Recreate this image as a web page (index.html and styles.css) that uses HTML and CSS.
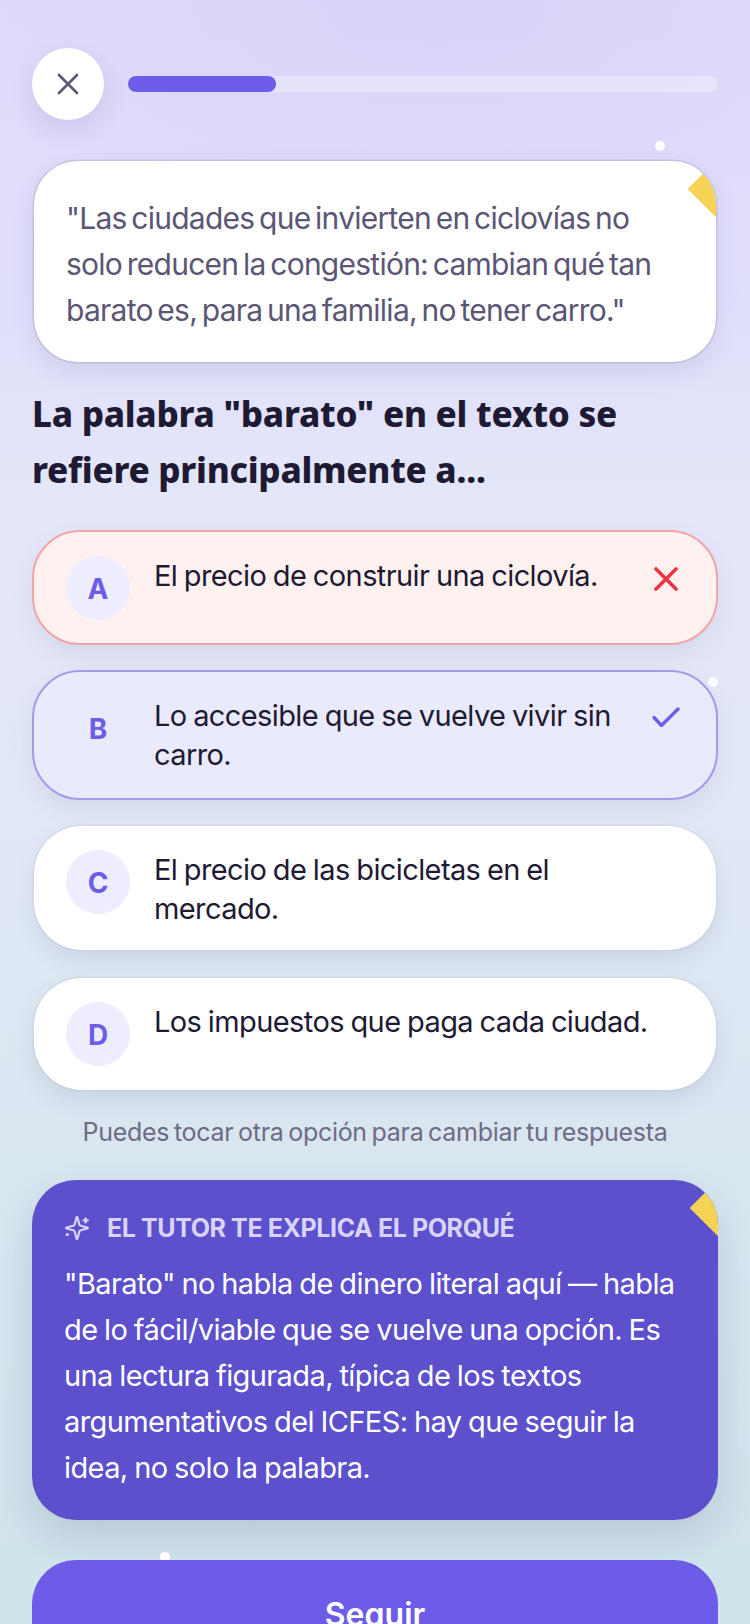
FILE: index.html
```html
<!DOCTYPE html>
<html lang="es">
<head>
<meta charset="utf-8">
<title>Pregunta</title>
<link rel="stylesheet" href="styles.css">
</head>
<body>
<main class="screen">
  <span class="dot dot-1"></span>
  <span class="dot dot-2"></span>
  <span class="dot dot-3"></span>
  <header class="top">
    <button class="close" aria-label="Cerrar">
      <svg width="24" height="24" viewBox="0 0 24 24" fill="none" stroke="#5b5675" stroke-width="2.6" stroke-linecap="round"><path d="M3 3l18 18M21 3L3 21"/></svg>
    </button>
    <div class="track"><div class="fill"></div></div>
  </header>
  <section class="quote">
    <span class="tag"></span>
    <p>"Las ciudades que invierten en ciclovías no solo reducen la congestión: cambian qué tan barato es, para una familia, no tener carro."</p>
  </section>
  <h1 class="question">La palabra "barato" en el texto se refiere principalmente a...</h1>
  <div class="options">
    <div class="option wrong">
      <span class="letter">A</span>
      <span class="text">El precio de construir una ciclovía.</span>
      <svg class="mark mark-x" width="24" height="24" viewBox="0 0 24 24" fill="none" stroke="#ef3340" stroke-width="3.6" stroke-linecap="round"><path d="M2 2l20 20M22 2L2 22"/></svg>
    </div>
    <div class="option right">
      <span class="letter plain">B</span>
      <span class="text">Lo accesible que se vuelve vivir sin carro.</span>
      <svg class="mark mark-check" width="28" height="20" viewBox="0 0 28 20" fill="none" stroke="#6c5ce7" stroke-width="3.3" stroke-linecap="round" stroke-linejoin="round"><path d="M2 10.500l7.500 8L26 2"/></svg>
    </div>
    <div class="option plainrow">
      <span class="letter">C</span>
      <span class="text">El precio de las bicicletas en el mercado.</span>
    </div>
    <div class="option plainrow">
      <span class="letter">D</span>
      <span class="text">Los impuestos que paga cada ciudad.</span>
    </div>
  </div>
  <p class="hint">Puedes tocar otra opción para cambiar tu respuesta</p>
  <section class="tutor">
    <span class="tag"></span>
    <h2><svg width="26" height="26" viewBox="0 0 24 24" fill="none" stroke="#d9d4fb" stroke-width="2" stroke-linejoin="round" stroke-linecap="round"><path d="M9.937 15.500A2 2 0 0 0 8.500 14.063l-6.135-1.582a.5.5 0 0 1 0-.962L8.500 9.936A2 2 0 0 0 9.937 8.500l1.582-6.135a.5.5 0 0 1 .963 0L14.063 8.500A2 2 0 0 0 15.500 9.937l6.135 1.581a.5.5 0 0 1 0 .964L15.500 14.063a2 2 0 0 0-1.437 1.437l-1.582 6.135a.5.5 0 0 1-.963 0z"/><path d="M20 3v4M22 5h-4"/><path d="M3 18h.01" stroke-width="3"/></svg>EL TUTOR TE EXPLICA EL PORQUÉ</h2>
    <p>"Barato" no habla de dinero literal aquí — habla de lo fácil/viable que se vuelve una opción. Es una lectura figurada, típica de los textos argumentativos del ICFES: hay que seguir la idea, no solo la palabra.</p>
  </section>
  <button class="next">Seguir</button>
</main>
</body>
</html>
```
FILE: styles.css
```css
* { box-sizing: border-box; }
html, body { margin: 0; height: 100%; overflow: hidden; }
body { font-family: "Inter", "Liberation Sans", sans-serif; color: #1e1a33; }
p, h1, h2 { margin: 0; }
.screen {
  position: relative;
  width: 750px;
  height: 1624px;
  overflow: hidden;
  padding: 48px 32px 0;
  background:
    radial-gradient(ellipse 480px 260px at 58% 0, rgba(212, 207, 247, .6), rgba(212, 207, 247, 0)),
    linear-gradient(180deg, #dedbf9 0%, #e0dffb 20%, #e4e7f9 31%, #e2e8f6 50%, #d9e6f0 70%, #cee3ea 100%);
}
.dot { position: absolute; z-index: 1; width: 10px; height: 10px; border-radius: 50%; background: #fff; }
.dot-1 { left: 655px; top: 141px; }
.dot-2 { left: 708px; top: 677px; }
.dot-3 { left: 160px; top: 1552px; }
.top { display: flex; align-items: center; gap: 24px; }
.close {
  width: 72px; height: 72px; border: 0; border-radius: 50%; background: #fff; padding: 0;
  display: flex; align-items: center; justify-content: center; flex: none;
  box-shadow: 0 10px 24px rgba(90, 80, 160, .14);
}
.track { flex: 1; height: 16px; border-radius: 8px; background: rgba(255, 255, 255, .3); }
.fill { width: 148px; height: 100%; border-radius: 8px; background: #6c5ce7; }
.quote {
  position: relative; overflow: hidden; margin: 41px 2px 0; height: 201px;
  padding: 34px 40px 30px 32px; background: #fff; border-radius: 44px;
  box-shadow: 0 0 0 1.500px rgba(80, 80, 80, .15), 0 10px 24px rgba(80, 80, 140, .12);
}
.quote p { font-size: 30px; line-height: 46px; letter-spacing: -.75px; word-spacing: -3px; color: #5b5675; }
.tag { position: absolute; width: 40px; height: 40px; background: #f6d354; transform: rotate(45deg); right: -20px; top: 8px; }
.question {
  margin-top: 24px; font-family: "Noto Sans", sans-serif; font-weight: 800; font-size: 35px; line-height: 56px;
  letter-spacing: -.25px; color: #1e1a33;
}
.options { display: flex; flex-direction: column; gap: 26px; margin-top: 32px; }
.option {
  position: relative; display: flex; align-items: flex-start; gap: 24px; padding: 24px 32px;
  border-radius: 48px;
}
.option.wrong { height: 115px; margin-bottom: -1px; background: #fff1f0; border: 2px solid #f4a3a6; box-shadow: 0 10px 22px rgba(80, 80, 140, .1); }
.option.right { background: #e9eafc; border: 2px solid #a29bea; box-shadow: 0 10px 22px rgba(80, 80, 140, .1); }
.plainrow {
  min-height: 112px; margin: 0 2px 2px; padding-bottom: 22px; background: #fff;
  box-shadow: 0 0 0 1.500px rgba(80, 80, 80, .05), 0 10px 22px rgba(80, 80, 140, .12);
}
.letter {
  flex: none; width: 64px; height: 64px; padding-top: 2px; border-radius: 50%; background: #eeedfd; color: #6c5ce7;
  display: flex; align-items: center; justify-content: center; font-weight: 700; font-size: 28px;
}
.letter.plain { background: transparent; }
.text { max-width: 510px; font-size: 29px; line-height: 39px; letter-spacing: -.6px; word-spacing: -1px; color: #1e1a33; }
.mark { position: absolute; }
.mark-x { right: 38px; top: 35px; }
.mark-check { right: 36px; top: 35px; }
.hint { margin-top: 24px; text-align: center; font-size: 25px; line-height: 32px; letter-spacing: -.3px; word-spacing: -2px; color: #6f6a85; }
.tutor {
  position: relative; overflow: hidden; margin-top: 32px; height: 340px; padding: 30px 32px;
  background: #5c50cc; border-radius: 44px; color: #fff;
  box-shadow: 0 16px 36px rgba(60, 60, 110, .16);
}
.tutor .tag { top: 8px; }
.tutor h2 { display: flex; align-items: center; gap: 17px; font-size: 25px; line-height: 36px; font-weight: 700; letter-spacing: -.4px; color: #d9d4fb; }
.tutor p { margin-top: 15px; font-size: 29px; line-height: 46px; letter-spacing: -.6px; word-spacing: -1px; }
.next {
  display: block; position: relative; z-index: 2; width: 100%; height: 120px; margin-top: 40px;
  border: 0; border-radius: 44px; background: #6c5ce7; color: #fff;
  font-family: inherit; font-size: 32px; font-weight: 600; padding: 0 0 12px;
}
```
